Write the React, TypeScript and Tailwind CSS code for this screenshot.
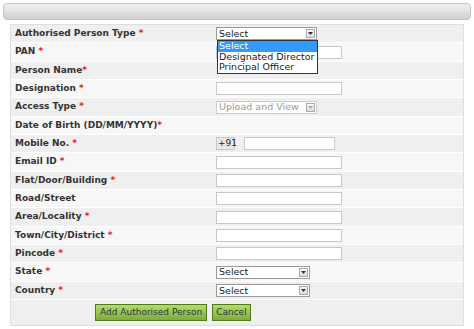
import React from "react";

type Field = {
  label: string;
  required?: boolean;
  tight?: boolean;
  kind: "select" | "text" | "disabled" | "none" | "mobile" | "selectShort";
};

const fields: Field[] = [
  { label: "Authorised Person Type", required: true, kind: "select" },
  { label: "PAN", required: true, kind: "text" },
  { label: "Person Name", required: true, tight: true, kind: "none" },
  { label: "Designation", required: true, kind: "text" },
  { label: "Access Type", required: true, kind: "disabled" },
  { label: "Date of Birth (DD/MM/YYYY)", required: true, tight: true, kind: "none" },
  { label: "Mobile No.", required: true, kind: "mobile" },
  { label: "Email ID", required: true, kind: "text" },
  { label: "Flat/Door/Building", required: true, kind: "text" },
  { label: "Road/Street", kind: "text" },
  { label: "Area/Locality", required: true, kind: "text" },
  { label: "Town/City/District", required: true, kind: "text" },
  { label: "Pincode", required: true, kind: "text" },
  { label: "State", required: true, kind: "selectShort" },
  { label: "Country", required: true, kind: "selectShort" },
];

function Arrow({ disabled }: { disabled?: boolean }) {
  return (
    <div className="w-[9px] h-[9px] border border-[#a9a9a9] bg-gradient-to-b from-[#fafafa] to-[#dcdcdc] flex items-center justify-center">
      <svg width="5" height="3" viewBox="0 0 5 3">
        <path d="M0 0h5L2.5 3z" fill={disabled ? "#aaa" : "#333"} />
      </svg>
    </div>
  );
}

function SelectBox({ width, text, disabled }: { width: string; text: string; disabled?: boolean }) {
  return (
    <div
      className={`${width} h-[13px] border ${
        disabled ? "border-[#ccc] text-[#999]" : "border-[#9a9a9a] text-[#222]"
      } bg-white flex items-center justify-between pl-[2px] pr-[1px] text-[9.5px] leading-none`}
    >
      <span>{text}</span>
      <Arrow disabled={disabled} />
    </div>
  );
}

function TextBox({ width = "w-[126px]" }: { width?: string }) {
  return <div className={`${width} h-[13px] border border-[#c8c8c8] bg-white`} />;
}

function Control({ kind }: { kind: Field["kind"] }) {
  switch (kind) {
    case "select":
      return <SelectBox width="w-[101px]" text="Select" />;
    case "selectShort":
      return <SelectBox width="w-[94px]" text="Select" />;
    case "disabled":
      return <SelectBox width="w-[101px]" text="Upload and View" disabled />;
    case "text":
      return <TextBox />;
    case "mobile":
      return (
        <div className="flex items-center gap-[9px]">
          <div className="w-[19px] h-[13px] border border-[#c8c8c8] bg-[#e8e8e8] text-[9px] leading-none text-[#222] flex items-center pl-[1px]">
            +91
          </div>
          <TextBox width="w-[91px]" />
        </div>
      );
    default:
      return null;
  }
}

export default function App() {
  return (
    <div
      className="w-[474px] h-[329px] bg-white overflow-hidden pt-[3px]"
      style={{ fontFamily: "Verdana, 'DejaVu Sans', sans-serif" }}
    >
      <div className="mx-[3px] h-[17px] rounded-[4px] border border-[#c4c4c4] bg-gradient-to-b from-[#f2f2f2] via-[#e2e2e2] to-[#cfcfcf]" />

      <div className="relative ml-[10px] mt-[4px] w-[454px] border border-[#dedede] bg-[#f4f4f4]">
        {fields.map((f, i) => (
          <div
            key={f.label}
            className={`flex items-center h-[18.35px] border-b border-white ${
              i % 2 === 0 ? "bg-[#efefef]" : "bg-[#f7f7f7]"
            }`}
          >
            <div className="w-[205px] pl-[4px] text-[9px] font-bold text-[#333] whitespace-nowrap">
              {f.label}
              {f.required && <span className="text-[#d22] font-bold">{f.tight ? "*" : " *"}</span>}
            </div>
            <div className="flex-1">
              <Control kind={f.kind} />
            </div>
          </div>
        ))}

        <div className="h-[25px] flex items-center pl-[84px] gap-[5px] bg-[#efefef]">
          <button className="h-[17px] px-[4px] border border-[#4f7a1e] bg-gradient-to-b from-[#b4dc6a] to-[#7eac34] text-[9px] text-[#26364a] leading-none">
            Add Authorised Person
          </button>
          <button className="h-[17px] px-[3px] border border-[#4f7a1e] bg-gradient-to-b from-[#b4dc6a] to-[#7eac34] text-[9px] text-[#26364a] leading-none">
            Cancel
          </button>
        </div>

        <div className="absolute left-[206px] top-[15px] w-[101px] border border-[#333] bg-white text-[9.5px] leading-[10.5px] text-[#222]">
          <div className="bg-[#3399ff] text-white pl-[1px]">Select</div>
          <div className="pl-[1px]">Designated Director</div>
          <div className="pl-[1px]">Principal Officer</div>
        </div>
      </div>
    </div>
  );
}
